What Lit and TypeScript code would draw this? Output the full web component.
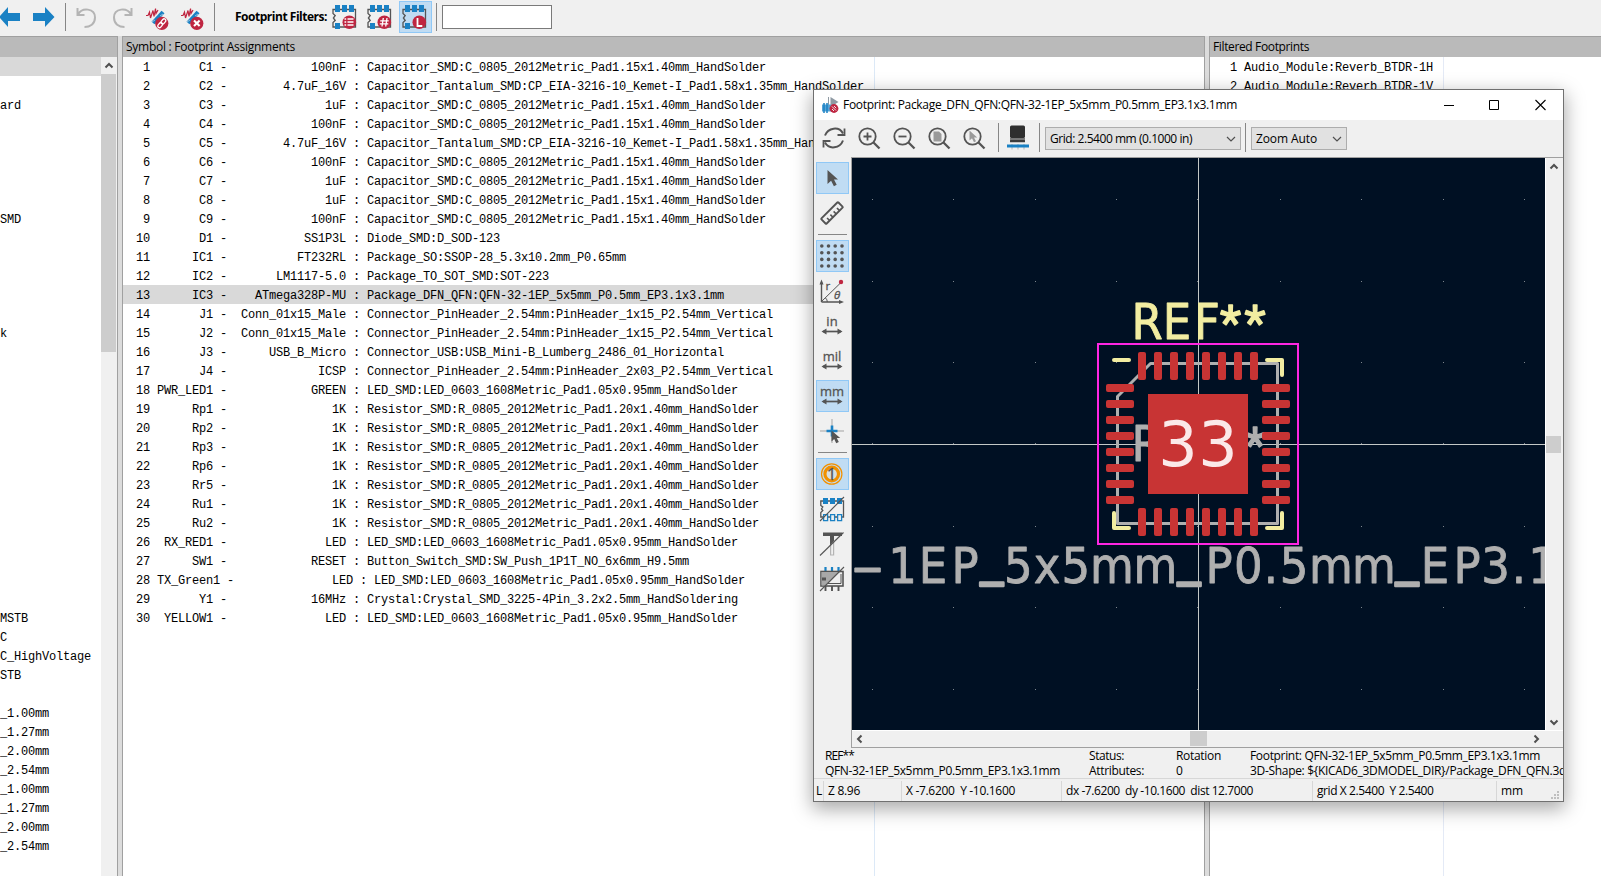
import { LitElement, html, svg, css } from "lit";
import { customElement, property } from "lit/decorators.js";

const C0805 = "Capacitor_SMD:C_0805_2012Metric_Pad1.15x1.40mm_HandSolder";
const CTANT = "Capacitor_Tantalum_SMD:CP_EIA-3216-10_Kemet-I_Pad1.58x1.35mm_HandSolder";
const R0805 = "Resistor_SMD:R_0805_2012Metric_Pad1.20x1.40mm_HandSolder";
const L0603 = "LED_SMD:LED_0603_1608Metric_Pad1.05x0.95mm_HandSolder";

const ASSIGNMENTS: [string, string, string][] = [
  ["C1", "100nF", C0805],
  ["C2", "4.7uF_16V", CTANT],
  ["C3", "1uF", C0805],
  ["C4", "100nF", C0805],
  ["C5", "4.7uF_16V", CTANT],
  ["C6", "100nF", C0805],
  ["C7", "1uF", C0805],
  ["C8", "1uF", C0805],
  ["C9", "100nF", C0805],
  ["D1", "SS1P3L", "Diode_SMD:D_SOD-123"],
  ["IC1", "FT232RL", "Package_SO:SSOP-28_5.3x10.2mm_P0.65mm"],
  ["IC2", "LM1117-5.0", "Package_TO_SOT_SMD:SOT-223"],
  ["IC3", "ATmega328P-MU", "Package_DFN_QFN:QFN-32-1EP_5x5mm_P0.5mm_EP3.1x3.1mm"],
  ["J1", "Conn_01x15_Male", "Connector_PinHeader_2.54mm:PinHeader_1x15_P2.54mm_Vertical"],
  ["J2", "Conn_01x15_Male", "Connector_PinHeader_2.54mm:PinHeader_1x15_P2.54mm_Vertical"],
  ["J3", "USB_B_Micro", "Connector_USB:USB_Mini-B_Lumberg_2486_01_Horizontal"],
  ["J4", "ICSP", "Connector_PinHeader_2.54mm:PinHeader_2x03_P2.54mm_Vertical"],
  ["PWR_LED1", "GREEN", L0603],
  ["Rp1", "1K", R0805],
  ["Rp2", "1K", R0805],
  ["Rp3", "1K", R0805],
  ["Rp6", "1K", R0805],
  ["Rr5", "1K", R0805],
  ["Ru1", "1K", R0805],
  ["Ru2", "1K", R0805],
  ["RX_RED1", "LED", L0603],
  ["SW1", "RESET", "Button_Switch_SMD:SW_Push_1P1T_NO_6x6mm_H9.5mm"],
  ["TX_Green1", "LED", L0603],
  ["Y1", "16MHz", "Crystal:Crystal_SMD_3225-4Pin_3.2x2.5mm_HandSoldering"],
  ["YELLOW1", "LED", L0603],
];

const LIBRARIES: Record<number, string> = {
  2: "ard", 8: "SMD", 14: "k", 29: "MSTB", 30: "C", 31: "C_HighVoltage", 32: "STB",
  34: "_1.00mm", 35: "_1.27mm", 36: "_2.00mm", 37: "_2.54mm",
  38: "_1.00mm", 39: "_1.27mm", 40: "_2.00mm", 41: "_2.54mm",
};

const FILTERED = ["Audio_Module:Reverb_BTDR-1H", "Audio_Module:Reverb_BTDR-1V"];

/** Single-line label whose tracking is tuned so that it takes up `w` pixels. */
@customElement("ui-label")
class UiLabel extends LitElement {
  @property() text = "";
  @property({ type: Number }) w = 0;

  static styles = css`
    :host { display: inline-block; white-space: pre; flex: none; }
  `;

  updated() {
    const span = this.renderRoot.querySelector("span") as HTMLElement;
    span.style.letterSpacing = "0";
    if (!this.w) return;
    const delta = this.w - span.getBoundingClientRect().width;
    span.style.letterSpacing = `${delta / this.text.length}px`;
  }

  render() {
    return html`<span>${this.text}</span>`;
  }
}

const GREY = "#545454";
const BLUE = "#1a81c4";
const RED = "#bf2641";

const chipFilter = (badge: unknown) => svg`
  <path d="M1 4.5H23.5V22H1V17.5L3.2 15.5 1.4 13 3.2 10.5 1 8.5Z" fill="none" stroke=${GREY} stroke-width="1.3"/>
  <path d="M3 0h5v7H3zM10 0h5v7h-5zM17 0h5v7h-5zM3 18h5v6H3z" fill=${BLUE}/>
  <circle cx="17.3" cy="17.2" r="6.8" fill=${RED}/>${badge}`;

const assoc = (badge: unknown) => svg`
  <path d="M7 15L17 4" stroke=${BLUE} stroke-width="4"/>
  <path d="M6 14l3-2M14 8l3-2" stroke="#efefef" stroke-width="0.6"/>
  <path d="M0 7.500h2L3.500 4l1 6L7 2.500l1 6L9.500 0.500l0.500 5L12 2" fill="none" stroke=${RED} stroke-width="1.200"/>
  <circle cx="15.8" cy="15.3" r="6.6" fill=${RED}/>${badge}`;

const lens = (inner: unknown) => svg`
  <circle cx="9.5" cy="9.5" r="8.2" fill="none" stroke=${GREY} stroke-width="1.8"/>
  <path d="M15.5 15.5L21.5 21.5" stroke=${GREY} stroke-width="2.3"/>${inner}`;

const unit = (label: string) => svg`
  <text class="glyph unit" x="12" y="12" text-anchor="middle">${label}</text>
  <path d="M3 17.500H21" stroke=${GREY} stroke-width="1.700"/>
  <path d="M1.500 17.500l5-3v6zM22.500 17.500l-5-3v6z" fill=${GREY}/>`;

const ICONS: Record<string, unknown> = {
  arrowLeft: svg`<path d="M0 12L9 2v6h12v8H9v6z" fill=${BLUE}/>`,
  arrowRight: svg`<path d="M22.500 12L13 2v6H1v8h12v6z" fill=${BLUE}/>`,
  undo: svg`<path d="M2.500 3v7h7M3 9.500C7 2 20 3 20 12.500 20 19 15 22 9.500 22" fill="none" stroke="#b4b4b4" stroke-width="2"/>`,
  redo: svg`<path d="M19.500 3v7h-7M19 9.500C15 2 2 3 2 12.500 2 19 7 22 12.500 22" fill="none" stroke="#b4b4b4" stroke-width="2"/>`,
  assocLink: assoc(svg`<g fill="none" stroke="#fff" stroke-width="1.300"><rect x="-1.700" y="-3" width="3.400" height="5.600" rx="1.700" transform="translate(17.300 13.600) rotate(40)"/><rect x="-1.700" y="-2.600" width="3.400" height="5.600" rx="1.700" transform="translate(14.300 17) rotate(40)"/></g>`),
  assocDelete: assoc(svg`<path d="M13 12.500l5.600 5.600M18.600 12.500l-5.600 5.600" stroke="#fff" stroke-width="2.100"/>`),
  filterList: chipFilter(svg`<path d="M15.500 14h6M15.500 17h6M15.500 20h6M12.500 14h1.700M12.500 17h1.700M12.500 20h1.700" stroke="#fff" stroke-width="1.500"/>`),
  filterPin: chipFilter(svg`<path d="M16.300 13l-1.300 8.500M20 13l-1.300 8.500M13.200 15.800h8.500M12.800 18.800h8.500" stroke="#fff" stroke-width="1.300"/>`),
  filterLib: chipFilter(svg`<path d="M15.500 13v8h4.800" fill="none" stroke="#fff" stroke-width="1.800"/>`),
  refresh: svg`<path d="M2 8.500C5 0.500 16 -1 20 6.500M20 13.500C17 21.500 6 23 2 15.500" fill="none" stroke=${GREY} stroke-width="2"/>
    <path d="M21.500 1.500v6.500h-7M0.500 20.500V14h7" fill="none" stroke=${GREY} stroke-width="1.800"/>`,
  zoomIn: lens(svg`<path d="M5.500 9.500h8M9.500 5.500v8" stroke=${GREY} stroke-width="1.800"/>`),
  zoomOut: lens(svg`<path d="M5.500 9.500h8" stroke=${GREY} stroke-width="1.800"/>`),
  zoomFit: lens(svg`<path d="M5.500 4.500h5.500l2.500 2.500v7.500h-8z" fill="#9a9a9a"/>`),
  zoomSel: lens(svg`<path d="M6.500 3.500v10l2.500-2.200 2 4 2-1-2-3.800h3.200z" fill="#9a9a9a"/>`),
  chip3d: svg`<path d="M5 18v5.500M11 18v5.500M17 18v5.500" stroke="#b5b5b5"/><rect x="3" y="-0.500" width="15" height="12.500" rx="1.500" fill="#2f2f2f"/>
    <rect x="3" y="12" width="15" height="1.800" fill="#777"/><rect x="3" y="13.800" width="15" height="2.500" rx="0.500" fill="#3c3c3c"/><rect x="0" y="18.500" width="22" height="3" fill=${BLUE}/>`,
  select: svg`<path d="M7.500 4v14l3.600-3.200 2.800 5.400 2.800-1.400-2.700-5.300h4z" fill=${GREY}/>`,
  measure: svg`<g transform="translate(12 12) rotate(-45)" fill="none" stroke=${GREY} stroke-width="1.900"><rect x="-12" y="-3.700" width="24" height="7.400" rx="0.800"/><path d="M-7 4V0M-2.300 4V0M2.300 4V0M7 4V0" stroke-width="1.600"/></g>`,
  grid: svg`${[2, 8.7, 15.4, 22].map((y) => [1.8, 8.5, 15.2, 22].map((x) => svg`<circle cx=${x} cy=${y} r="1.800" fill=${GREY}/>`))}`,
  polar: svg`<path d="M1.500 23V3M1.500 23H21" stroke=${GREY} stroke-width="1.400"/><path d="M1.500 0.500l2 5h-4zM24 23l-5-2v4z" fill=${GREY}/>
    <path d="M1.500 22.500L21 3.500M5.500 19a5 5 0 0 1 1.800 4" stroke=${GREY} fill="none"/><circle cx="21" cy="3" r="2.200" fill=${RED}/>
    <text class="glyph small" x="5.500" y="11">r</text><text class="glyph small it" x="14" y="19.500">θ</text>`,
  inch: unit("in"),
  mil: unit("mil"),
  mm: unit("mm"),
  cursor: svg`<path d="M12 0v24M0 12h24" stroke="#a3a3a3"/><path d="M12 6.500v11M6.500 12h11" stroke=${BLUE} stroke-width="2.600"/>
    <path d="M11.500 11.500v11l2.700-2.400 2 4.100 2.600-1.300-2-4h3.400z" fill=${GREY}/>`,
  padNumber: svg`<circle cx="11.700" cy="12" r="10.200" fill="none" stroke="#f29100" stroke-width="1.200"/><circle cx="11.700" cy="12" r="6.800" fill="#d9dfe0" stroke="#f29100" stroke-width="3.200"/>
    <text class="glyph big" x="11.700" y="18" text-anchor="middle">1</text>`,
  padSketch: svg`<path d="M0.800 4H23.500V20H0.800V15.500L2.800 13.500 1.500 12 2.800 10 0.800 8.500Z" fill="none" stroke=${GREY} stroke-width="1.300"/>
    <path d="M3 1h5v6H3zM10 1h5v6h-5zM17 1h5v6h-5z" fill=${BLUE}/><path d="M3.600 17.600h4v6h-4zM10.600 17.600h4v6h-4zM17.600 17.600h4v6h-4z" fill="#efefef" stroke=${BLUE} stroke-width="1.300"/>
    <path d="M0 24L24 0" stroke=${GREY} stroke-width="1.100"/>`,
  textSketch: svg`<path d="M3 0.500h19v3.500H14v5l-4 4.500V4H3z" fill=${GREY}/><path d="M10.600 13v10h3V10" fill="none" stroke="#b5b5b5" stroke-width="1.200"/><path d="M0 23.500L23.500 0.500" stroke=${GREY} stroke-width="1.100"/>`,
  graphicSketch: svg`<path d="M5.500 18v6M12 18v6M18.500 18v6" stroke=${GREY} stroke-width="1.900"/><path d="M5.500 0v5M12 0v5M18.500 0v5" stroke=${BLUE} stroke-width="2.200"/>
    <rect x="1" y="4.500" width="22" height="14.500" fill="#efefef" stroke=${GREY} stroke-width="1.600"/><path d="M1.500 5H19L5 18.500H1.500z" fill="#a8a8a8"/>
    <path d="M21 7v9.500H8" fill="none" stroke=${GREY}/><rect x="2" y="10.500" width="4" height="3" fill=${GREY}/><path d="M0 24L24 0" stroke=${GREY} stroke-width="1.100"/>`,
  app: svg`<path d="M8.500 0l8 5-8 5z" fill="#8f9aa3"/><path d="M6.500 0v9" stroke="#8f9aa3"/><rect x="0" y="7.500" width="9" height="7" fill="#56a3d6"/><path d="M2 6v10M5 6v10" stroke=${BLUE} stroke-width="1.500"/>
    <circle cx="12" cy="11.500" r="4.400" fill=${RED}/><path d="M10 9.500l4 4M10 12l2 2M12 9l2.200 2.200" stroke="#fff" stroke-width="0.900"/>`,
};

const icon = (name: string, w = 24, h = 24) =>
  html`<svg class="icon" width=${w} height=${h} viewBox="0 0 ${w} ${h}">${ICONS[name]}</svg>`;

const CHEVRONS: Record<string, string> = {
  up: "M4.500 10.500L8 7l3.500 3.500",
  down: "M4.500 6.500L8 10l3.500-3.500",
  left: "M9.500 4.500L6 8l3.500 3.500",
  right: "M6.500 4.500L10 8l-3.500 3.500",
};

const chevron = (dir: string) =>
  html`<svg class="icon" width="16" height="16"><path d=${CHEVRONS[dir]} fill="none" stroke="#505050" stroke-width="2"/></svg>`;

const steps = (start: number) => Array.from({ length: 8 }, (_, i) => start + i * 16);

/** Footprint canvas: an unscaled board view with the QFN-32 in its middle. */
@customElement("footprint-canvas")
class FootprintCanvas extends LitElement {
  static styles = css`
    :host { display: block; background: #001023; overflow: hidden; }
    svg { display: block; }
    text { font-family: "DejaVu Sans Condensed", "DejaVu Sans", sans-serif; font-stretch: condensed; font-size: 50px; text-anchor: middle; }
    .silk { fill: #f2eda1; stroke: #f2eda1; }
    .fab { fill: #afafaf; stroke: #afafaf; }
    text.silk, text.fab, .fab { stroke-linejoin: round; }
    .star { font-family: Roboto, sans-serif; font-size: 49px; stroke-width: 1.4; }
    .low { stroke-width: 2.4; }
    .num { font-family: "DejaVu Sans", sans-serif; font-size: 62px; font-stretch: normal; fill: #fbe9e9; }
    .line { fill: none; stroke-linejoin: round; stroke-linecap: round; }
    .pad { fill: #c83434; }
  `;

  private ref(cls: string, y: number) {
    return svg`<text class=${cls} stroke-width="0.8" y=${y}><tspan x="1147">R</tspan><tspan x="1177">E</tspan><tspan x="1207">F</tspan><tspan class="star" x="1230.500 1255">**</tspan></text>`;
  }

  render() {
    const glyphs = [..."1EP_5x5mm_P0.5mm_EP3.1"];
    const xs = [902.5, 933, 965, 991.7, 1018.3, 1047, 1075.7, 1112, 1155.3, 1189, 1219, 1248.3, 1271, 1294, 1331, 1374, 1407, 1435, 1467, 1495.5, 1519, 1542.5];
    const dotsX = [872, 953, 1035, 1116, 1197, 1280, 1361, 1443, 1524];
    const dotsY = [199, 281, 362, 443, 526, 607, 689];
    return html`<svg width="693" height="572" viewBox="852 158 693 572">
      ${dotsY.map((y) => dotsX.map((x) => svg`<rect x=${x} y=${y} width="1" height="1" fill="#7d858c"/>`))}
      <path d="M1198.500 158V730M852 444.500H1545" stroke="#c4c8c6"/>
      <path class="line" d="M1150.500 363.500H1277.500V523.500H1117.500V396.500Z" stroke="#afafaf" stroke-width="3"/>
      ${this.ref("fab", 461)}
      <g class="pad">
        ${steps(1138).map((x) => svg`<rect x=${x} y="352" width="8" height="28" rx="2"/><rect x=${x} y="508" width="8" height="28" rx="2"/>`)}
        ${steps(384).map((y) => svg`<rect x="1106" y=${y} width="28" height="8" rx="2"/><rect x="1262" y=${y} width="28" height="8" rx="2"/>`)}
        <rect x="1148" y="394" width="100" height="100"/>
      </g>
      <text class="num" y="465.500" x="1178 1218">33</text>
      <path class="line" d="M1114 360H1129M1267 360H1282V375M1114 513V528H1129M1267 528H1282V513" stroke="#f2eda1" stroke-width="4"/>
      ${this.ref("silk", 338.5)}
      <rect x="1098" y="344" width="200" height="200" fill="none" stroke="#ff26e2" stroke-width="2"/>
      <g class="fab" stroke-width="0.8">
        <text transform="translate(867.500 583.500) scale(2.100 1)">-</text>
        <text>${glyphs.map((c, i) => svg`<tspan class=${c === "_" ? "low" : ""} x=${xs[i]} y=${c === "_" ? 573.5 : 583}>${c}</tspan>`)}</text>
      </g>
    </svg>`;
  }
}

@customElement("app-root")
class AppRoot extends LitElement {
  static styles = css`
    :host {
      display: block; position: relative; width: 1601px; height: 876px; overflow: hidden;
      background: #fff; color: #000; font: 12px/16px "Open Sans", "Noto Sans", sans-serif;
    }
    * { box-sizing: border-box; }
    .icon { display: block; flex: none; overflow: visible; }
    .glyph { font-family: "Open Sans", sans-serif; fill: #545454; stroke: #545454; stroke-width: 0.3; }
    .it { font-style: italic; }
    .unit { font-size: 13px; }
    .small { font-size: 11.5px; }
    .big { font-size: 17px; }

    .toolbar { display: flex; align-items: flex-start; height: 36px; background: #f0f0f0; }
    .cell { display: flex; align-items: center; justify-content: center; height: 34px; flex: none; }
    .nav { width: 33px; justify-content: flex-start; margin-left: -1px; }
    .nav2 { width: 33px; justify-content: flex-start; }
    .vsep { width: 1px; height: 28px; margin-top: 3px; background: #868686; flex: none; }
    .undo { width: 36px; justify-content: flex-start; margin-left: 9px; }
    .redo { width: 33px; justify-content: flex-start; padding-left: 1px; }
    .as { width: 35px; justify-content: flex-start; padding: 4px 0 0 2px; }
    .lead { padding: 0 1px 0 20px; font-weight: 700; }
    .tool { width: 32px; height: 32px; margin: 1px 3px 0 0; display: flex; align-items: center; justify-content: center; flex: none; }
    .tool.on { width: 33px; margin: 1px 4px 0 1px; padding-right: 3px; }
    .tool.on, .side .on { background: #c0dcf3; box-shadow: inset 0 0 0 1px #90c8f6; }
    .search { width: 110px; height: 24px; margin: 5px 0 0 5px; border: 1px solid #7a7a7a; background: #fff; }

    .body { display: flex; height: 840px; }
    .sash { width: 6px; background: #dcdcdc; border: solid #a0a0a0; border-width: 0 1px; flex: none; }
    .panel { display: flex; flex-direction: column; }
    .libs { width: 117px; }
    .assign { width: 1081px; }
    .found { flex: 1; }
    .head { height: 21px; background: #bababa; border-top: 1px solid #a0a0a0; padding: 2px 3px 0; flex: none; display: flex; }
    .content { flex: 1; display: flex; min-height: 0; }
    .list { flex: 1; overflow: hidden; font: 12px/19px "Liberation Mono", "Courier New", monospace; letter-spacing: -0.201px; }
    .row { height: 19px; padding-top: 2px; white-space: pre; }
    .row.sel { background: #d9d9d9; }
    .assign .row, .found .row { padding-left: 6px; }
    .assign .list { background: linear-gradient(#dce9f7, #dce9f7) 751px 0 / 1px 100% no-repeat; }
    .found .list { background: linear-gradient(#e4eaf6, #e4eaf6) 233px 0 / 1px 100% no-repeat; }
    .vbar { width: 16px; background: #f0f0f0; display: flex; flex-direction: column; flex: none; }
    .grow { flex: 1; }
    .thumb { background: #cdcdcd; flex: none; }
    .t1 { height: 278px; margin: 1px 1px 0 0; }

    .window {
      position: absolute; left: 813px; top: 89px; width: 751px; height: 713px; display: flex; flex-direction: column;
      border: 1px solid #707070; background: #f0f0f0; box-shadow: 0 6px 18px 1px rgba(0, 0, 0, .34);
    }
    .title { height: 30px; background: #fff; display: flex; align-items: center; padding: 0 0 1px 8px; flex: none; }
    .title ui-label { margin: 0 auto 0 5px; }
    .btns { display: flex; gap: 30px; padding-right: 10px; }
    .wtools { height: 37px; display: flex; padding: 6px 0 0 9px; flex: none; }
    .zt { width: 35px; padding-top: 1px; flex: none; }
    .chip { width: 40px; padding-left: 0; }
    .wtools .vsep { height: 29px; margin-top: -3px; }
    .combo { height: 23px; margin: 1px 0 0 5px; background: #e1e1e1; border: 1px solid #adadad; display: flex; align-items: center; justify-content: space-between; padding: 0 0 0 4px; flex: none; }
    .grid-combo { width: 196px; margin-right: 4px; }
    .zoom-combo { width: 96px; }
    .mid { height: 591px; display: flex; flex: none; }
    .side { width: 38px; padding: 5px 0 0 2px; display: flex; flex-direction: column; gap: 3px; border-right: 1px solid #a0a0a0; flex: none; }
    .side .b { width: 33px; height: 32px; padding-right: 1px; display: flex; align-items: center; justify-content: center; flex: none; }
    .hsep { height: 5px; width: 29px; margin-left: 2px; border: solid #f0f0f0; border-width: 2px 0; background: #868686; flex: none; }
    .view { flex: 1; display: flex; flex-direction: column; border: solid #a0a0a0; border-width: 1px 0; min-width: 0; }
    .upper { display: flex; height: 573px; border-bottom: 1px solid #fff; flex: none; }
    footprint-canvas { width: 693px; height: 572px; flex: none; }
    .wv { width: 17px; border-left: 1px solid #fff; }
    .t2 { height: 17px; margin-right: 1px; }
    .hbar { flex: 1; display: flex; }
    .t3 { width: 17px; height: 15px; }
    .corner { width: 19px; }
    .msg { height: 31px; display: flex; padding: 0 0 0 11px; line-height: 15px; border-bottom: 1px solid #d7d7d7; overflow: hidden; flex: none; }
    .col { display: flex; flex-direction: column; flex: none; }
    .m1 { width: 264px; } .m2 { width: 87px; } .m3 { width: 74px; }
    .status { flex: 1; display: flex; align-items: center; padding-top: 1px; }
    .st { height: 20px; padding: 1px 0 0 4px; border-right: 1px solid #d7d7d7; display: flex; align-items: center; flex: none; }
    .s1 { width: 10px; padding-left: 2px; } .s2 { width: 78px; } .s3 { width: 160px; } .s4 { width: 251px; } .s5 { width: 184px; }
    .st:last-of-type { border: 0; }
    .grip { margin: 10px 2px 0 auto; }
  `;

  private label(text: string, w: number) {
    return html`<ui-label .text=${text} .w=${w}></ui-label>`;
  }

  private side(name: string, on = false) {
    return html`<div class="b ${on ? "on" : ""}">${icon(name)}</div>`;
  }

  private drop() {
    return html`<svg class="icon" width="16" height="16"><path d="M3 6L7 10l4-4" fill="none" stroke="#505050" stroke-width="1.200"/></svg>`;
  }

  private renderWindow() {
    return html`<div class="window">
      <div class="title">
        ${icon("app", 16, 16)} ${this.label("Footprint: Package_DFN_QFN:QFN-32-1EP_5x5mm_P0.5mm_EP3.1x3.1mm", 394)}
        <div class="btns">
          <svg class="icon" width="16" height="16"><path d="M-1 8.500H9" stroke="#000"/></svg>
          <svg class="icon" width="16" height="16"><path d="M-1.500 3.500h9v9h-9z" fill="none" stroke="#000"/></svg>
          <svg class="icon" width="16" height="16"><path d="M-1.500 3l10 10M8.500 3l-10 10" stroke="#000" stroke-width="1.100"/></svg>
        </div>
      </div>
      <div class="wtools">
        ${["refresh", "zoomIn", "zoomOut", "zoomFit", "zoomSel"].map((n) => html`<div class="zt">${icon(n, 22, 22)}</div>`)}
        <div class="vsep"></div>
        <div class="zt chip"><svg class="icon" width="40" height="22" viewBox="-8 1 40 22">${ICONS.chip3d}</svg></div>
        <div class="vsep"></div>
        <div class="combo grid-combo">${this.label("Grid: 2.5400 mm (0.1000 in)", 142)}${this.drop()}</div>
        <div class="vsep"></div>
        <div class="combo zoom-combo">${this.label("Zoom Auto", 61)}${this.drop()}</div>
      </div>
      <div class="mid">
        <div class="side">
          ${this.side("select", true)}${this.side("measure")}
          <div class="hsep"></div>
          ${this.side("grid", true)}${this.side("polar")}${this.side("inch")}${this.side("mil")}${this.side("mm", true)}${this.side("cursor")}
          <div class="hsep"></div>
          ${this.side("padNumber", true)}${this.side("padSketch")}${this.side("textSketch")}${this.side("graphicSketch")}
        </div>
        <div class="view">
          <div class="upper">
            <footprint-canvas></footprint-canvas>
            <div class="vbar wv">${chevron("up")}<div class="grow"></div><div class="thumb t2"></div><div class="grow"></div>${chevron("down")}</div>
          </div>
          <div class="hbar">${chevron("left")}<div class="grow"></div><div class="thumb t3"></div><div class="grow"></div>${chevron("right")}<div class="corner"></div></div>
        </div>
      </div>
      <div class="msg">
        <div class="col m1">${this.label("REF**", 29)}${this.label("QFN-32-1EP_5x5mm_P0.5mm_EP3.1x3.1mm", 235)}</div>
        <div class="col m2">${this.label("Status:", 35)}${this.label("Attributes:", 55)}</div>
        <div class="col m3">${this.label("Rotation", 45)}${this.label("0", 6.5)}</div>
        <div class="col">${this.label("Footprint: QFN-32-1EP_5x5mm_P0.5mm_EP3.1x3.1mm", 290)}${this.label("3D-Shape: ${KICAD6_3DMODEL_DIR}/Package_DFN_QFN.3d", 316)}</div>
      </div>
      <div class="status">
        <div class="st s1">${this.label("L", 5.5)}</div>
        <div class="st s2">${this.label("Z 8.96", 32)}</div>
        <div class="st s3">${this.label("X -7.6200  Y -10.1600", 109)}</div>
        <div class="st s4">${this.label("dx -7.6200  dy -10.1600  dist 12.7000", 187)}</div>
        <div class="st s5">${this.label("grid X 2.5400  Y 2.5400", 116.5)}</div>
        <div class="st">${this.label("mm", 22)}</div>
        <svg class="grip" width="10" height="10"><path d="M6 0h2v2h-2zM3 3h2v2h-2zM6 3h2v2h-2zM0 6h2v2h-2zM3 6h2v2h-2zM6 6h2v2h-2z" fill="#bfbfbf"/></svg>
      </div>
    </div>`;
  }

  render() {
    return html`
      <div class="toolbar">
        <div class="cell nav">${icon("arrowLeft")}</div>
        <div class="cell nav2">${icon("arrowRight")}</div>
        <div class="vsep"></div>
        <div class="cell undo">${icon("undo")}</div>
        <div class="cell redo">${icon("redo")}</div>
        <div class="cell as">${icon("assocLink", 22, 22)}</div>
        <div class="cell as">${icon("assocDelete", 22, 22)}</div>
        <div class="vsep"></div>
        <div class="cell lead">${this.label("Footprint Filters:", 92)}</div>
        <div class="tool">${icon("filterList")}</div>
        <div class="tool">${icon("filterPin")}</div>
        <div class="tool on">${icon("filterLib")}</div>
        <div class="vsep"></div>
        <div class="search"></div>
      </div>
      <div class="body">
        <div class="panel libs">
          <div class="head"></div>
          <div class="content">
            <div class="list">${Array.from({ length: 43 }, (_, i) => html`<div class="row ${i === 0 ? "sel" : ""}">${LIBRARIES[i] ?? ""}</div>`)}</div>
            <div class="vbar">${chevron("up")}<div class="thumb t1"></div></div>
          </div>
        </div>
        <div class="sash"></div>
        <div class="panel assign">
          <div class="head">${this.label("Symbol : Footprint Assignments", 169)}</div>
          <div class="list">${ASSIGNMENTS.map(([ref, value, fp], i) => html`<div class="row ${ref === "IC3" ? "sel" : ""}">${`${String(i + 1).padStart(3)} ${ref.padStart(8)} - ${value.padStart(16)} : ${fp}`}</div>`)}</div>
        </div>
        <div class="sash"></div>
        <div class="panel found">
          <div class="head">${this.label("Filtered Footprints", 96)}</div>
          <div class="list">${FILTERED.map((name, i) => html`<div class="row">${`${String(i + 1).padStart(3)} ${name}`}</div>`)}</div>
        </div>
      </div>
      ${this.renderWindow()}
    `;
  }
}
